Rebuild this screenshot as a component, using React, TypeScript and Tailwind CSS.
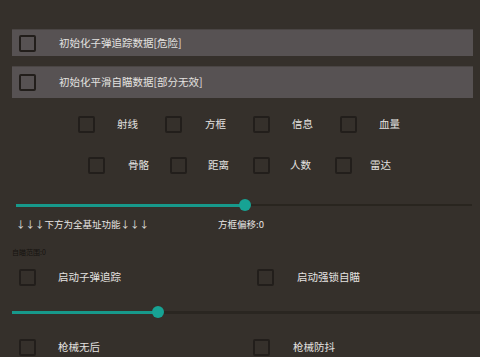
import React from "react";

const Box = () => (
  <div className="w-[17px] h-[17px] shrink-0 border-2 border-[#221e1b] rounded-[2px]" />
);

const Label = ({ children, className = "" }: { children: React.ReactNode; className?: string }) => (
  <span className={"text-[10.5px] leading-none text-[#e4e2e0] whitespace-nowrap " + className}>{children}</span>
);

const Cell = ({ w, gap, label }: { w: string; gap: string; label: string }) => (
  <div className={"flex items-center shrink-0 " + w}>
    <Box />
    <Label className={gap}>{label}</Label>
  </div>
);

export default function App() {
  return (
    <div
      className="w-[480px] h-[357px] overflow-hidden bg-[#35302b] flex flex-col"
      style={{ fontFamily: '"Noto Sans CJK SC", "Noto Sans", sans-serif' }}
    >
      {/* Row 1 */}
      <div className="mt-[29px] ml-[12px] mr-[7px] h-[27px] bg-[#575253] border-t border-[#4a4544] flex items-center pl-[7px]">
        <Box />
        <Label className="ml-[23px]">初始化子弹追踪数据[危险]</Label>
      </div>
      {/* Row 2 */}
      <div className="mt-[10px] ml-[12px] mr-[7px] h-[32px] bg-[#575253] border-t border-[#4a4544] flex items-center pl-[7px]">
        <Box />
        <Label className="ml-[23px]">初始化平滑自瞄数据[部分无效]</Label>
      </div>
      {/* Row 3 */}
      <div className="mt-[16px] h-[20px] flex items-center pl-[78px]">
        <Cell w="w-[87px]" gap="ml-[22px]" label="射线" />
        <Cell w="w-[88px]" gap="ml-[23px]" label="方框" />
        <Cell w="w-[87px]" gap="ml-[22px]" label="信息" />
        <Cell w="w-[87px]" gap="ml-[22px]" label="血量" />
      </div>
      {/* Row 4 */}
      <div className="mt-[21px] h-[20px] flex items-center pl-[88px]">
        <Cell w="w-[82px]" gap="ml-[23px]" label="骨骼" />
        <Cell w="w-[83px]" gap="ml-[21px]" label="距离" />
        <Cell w="w-[82px]" gap="ml-[20px]" label="人数" />
        <Cell w="w-[82px]" gap="ml-[18px]" label="雷达" />
      </div>
      {/* Slider 1 */}
      <div className="mt-[24px] h-[12px] ml-[16px] w-[456px] relative flex items-center">
        <div className="h-[2px] w-full bg-[#29251f]" />
        <div className="absolute left-0 top-[5px] h-[3px] w-[229px] bg-[#17998b]" />
        <div className="absolute left-[223px] top-0 w-[12px] h-[12px] rounded-full bg-[#17a394]" />
      </div>
      {/* Text row */}
      <div className="mt-[7px] h-[14px] flex items-center">
        <span className="ml-[16px] w-[202px] shrink-0 text-[9.5px] leading-none text-[#e8e6e4] whitespace-nowrap">↓↓↓下方为全基址功能↓↓↓</span>
        <span className="text-[9.5px] leading-none text-[#e8e6e4] whitespace-nowrap">方框偏移:0</span>
      </div>
      {/* Small text */}
      <div className="mt-[16px] h-[8px] flex items-center">
        <span className="ml-[12px] text-[7px] leading-none text-[#161310] whitespace-nowrap">自瞄范围:0</span>
      </div>
      {/* Row 5 */}
      <div className="mt-[11px] h-[20px] flex items-center pl-[19px]">
        <Cell w="w-[238px]" gap="ml-[22px]" label="启动子弹追踪" />
        <Cell w="w-[100px]" gap="ml-[23px]" label="启动强锁自瞄" />
      </div>
      {/* Slider 2 */}
      <div className="mt-[19px] h-[12px] ml-[12px] w-[468px] relative flex items-center">
        <div className="h-[3px] w-full bg-[#2a2621]" />
        <div className="absolute left-0 top-[5px] h-[3px] w-[146px] bg-[#17998b]" />
        <div className="absolute left-[140px] top-0 w-[12px] h-[12px] rounded-full bg-[#17a394]" />
      </div>
      {/* Row 6 */}
      <div className="mt-[19px] h-[20px] flex items-center pl-[19px]">
        <Cell w="w-[234px]" gap="ml-[22px]" label="枪械无后" />
        <Cell w="w-[100px]" gap="ml-[23px]" label="枪械防抖" />
      </div>
    </div>
  );
}
